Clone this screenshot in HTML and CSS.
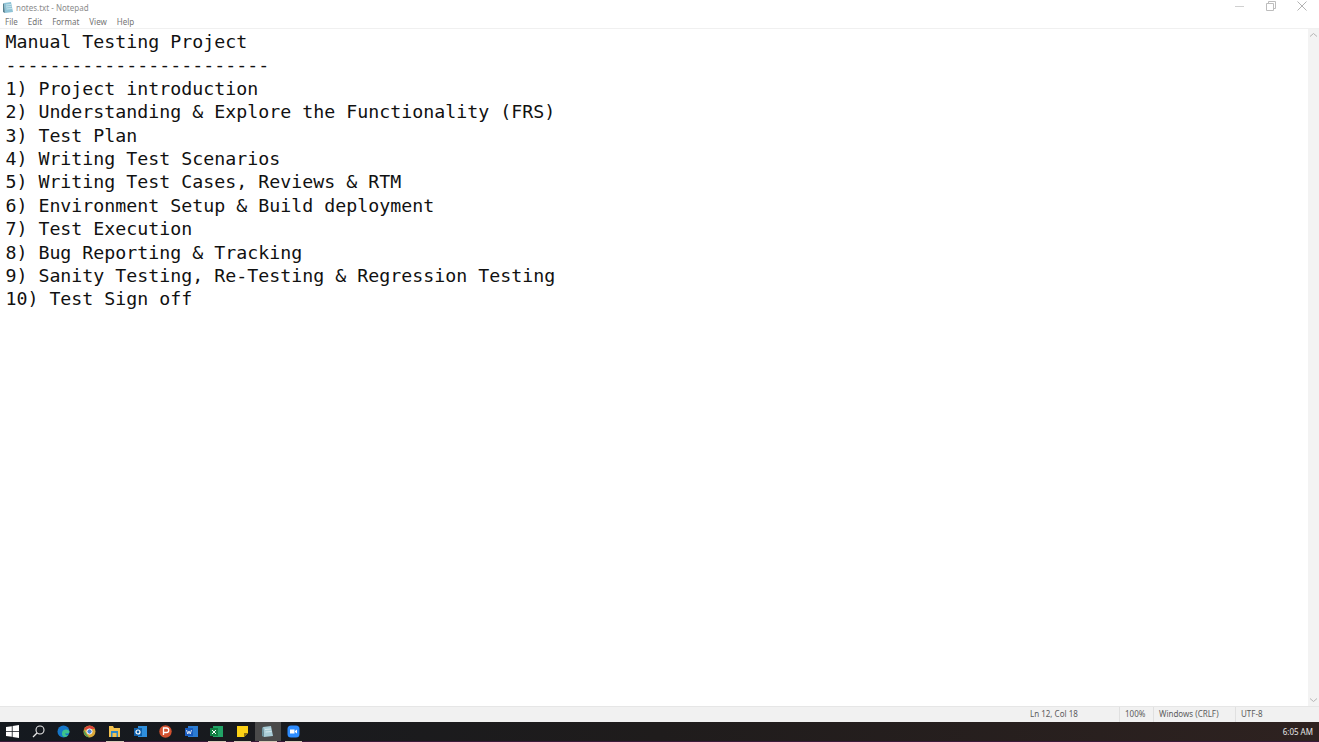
FILE: index.html
```html
<!DOCTYPE html>
<html>
	<head>
		<meta charset="UTF-8">
		<title>notes.txt - Notepad</title>
		<link rel="stylesheet" href="styles.css">
	</head>
	<body>
		<div class="window">
			<div class="titlebar">
				<svg class="app-icon" width="12" height="13" viewBox="0 0 12 13">
					<path d="M2 2 L9 1 L11 11 L3 12 Z" fill="#8fc3d6"/>
					<path d="M2 2 L3 12 L1 11 L1 3 Z" fill="#55808f"/>
					<path d="M4 4 L9 3.5 M4 6 L9.500 5.500 M4.500 8 L10 7.500" stroke="#d8edf3" stroke-width="0.8"/>
				</svg>
				<span class="title">notes.txt - Notepad</span>
				<div class="controls">
					<svg width="10" height="10" viewBox="0 0 10 10"><path d="M0 5.500 H9" stroke="#d0d0d0"/></svg>
					<svg width="10" height="10" viewBox="0 0 10 10"><path d="M.5 2.500 H7.500 V9.500 H.5 Z M2.500 2.500 V.5 H9.500 V7.500 H7.500" fill="none" stroke="#bdbdbd"/></svg>
					<svg width="10" height="10" viewBox="0 0 10 10"><path d="M.5 .5 L9.500 9.500 M9.500 .5 L.5 9.500" stroke="#aaa" stroke-width="0.9"/></svg>
				</div>
			</div>
			<div class="menubar">
				<span>File</span>
				<span>Edit</span>
				<span>Format</span>
				<span>View</span>
				<span>Help</span>
			</div>
			<div class="editor">
				<pre class="text">Manual Testing Project
------------------------
1) Project introduction
2) Understanding &amp; Explore the Functionality (FRS)
3) Test Plan
4) Writing Test Scenarios
5) Writing Test Cases, Reviews &amp; RTM
6) Environment Setup &amp; Build deployment
7) Test Execution
8) Bug Reporting &amp; Tracking
9) Sanity Testing, Re-Testing &amp; Regression Testing
10) Test Sign off</pre>
				<div class="scrollbar">
					<svg width="9" height="6" viewBox="0 0 9 6"><path d="M1 4.500 L4.500 1.500 L8 4.500" fill="none" stroke="#b5b5b5"/></svg>
					<svg width="9" height="6" viewBox="0 0 9 6"><path d="M1 1.500 L4.500 4.500 L8 1.500" fill="none" stroke="#b5b5b5"/></svg>
				</div>
			</div>
			<div class="statusbar">
				<span class="cell cell-pos">Ln 12, Col 18</span>
				<span class="cell cell-zoom">100%</span>
				<span class="cell cell-eol">Windows (CRLF)</span>
				<span class="cell cell-enc">UTF-8</span>
			</div>
		</div>
		<div class="taskbar">
			<div class="tb-item">
				<svg width="13" height="13" viewBox="0 0 13 13"><path d="M0 2 L5.800 1.200 V6 H0 Z M6.600 1 L13 0 V6 H6.600 Z M0 6.800 H5.800 V11.800 L0 11 Z M6.600 6.800 H13 V13 L6.600 12 Z" fill="#fff"/></svg>
			</div>
			<div class="tb-item">
				<svg width="13" height="13" viewBox="0 0 13 13"><circle cx="8" cy="5" r="4" fill="none" stroke="#e8e8e8" stroke-width="1.100"/><path d="M5 8 L1 12" stroke="#e8e8e8" stroke-width="1.200"/></svg>
			</div>
			<div class="tb-item">
				<svg width="13" height="13" viewBox="0 0 13 13"><circle cx="6.500" cy="6.500" r="6" fill="#1576c8"/><path d="M6 5.500 C9 3.500 12.500 5 12.500 7 C12.500 8.500 9.500 9 8 8.200 C8.500 10 10 10.800 11.500 10 C9.500 12.800 5 12.500 5 9 C5 7.500 5.300 6.300 6 5.500 Z" fill="#3cc48c"/></svg>
			</div>
			<div class="tb-item">
				<svg width="13" height="13" viewBox="0 0 13 13"><circle cx="6.500" cy="6.500" r="6" fill="#d9a93a"/><path d="M1 5 A6 6 0 0 1 12 4 H6 Z" fill="#d8433a"/><path d="M1 5 L4 10 L6.500 12.500 A6 6 0 0 1 1 5 Z" fill="#4a9e54"/><circle cx="6.500" cy="6.500" r="2.600" fill="#4a86d8" stroke="#fff"/></svg>
			</div>
			<div class="tb-item tb-open">
				<svg width="13" height="13" viewBox="0 0 13 13"><path d="M1 1 H5 L6 3 H12 V12 H1 Z" fill="#f2c14e"/><path d="M3 6 H10 V12 H8.500 V8 H4.500 V12 H3 Z" fill="#2f88c9"/></svg>
			</div>
			<div class="tb-item">
				<svg width="13" height="13" viewBox="0 0 13 13"><rect x="4" y="1" width="9" height="11" fill="#2f8fdc"/><rect x="0" y="3" width="8" height="8" fill="#0f5fa8"/><circle cx="4" cy="7" r="2" fill="none" stroke="#fff" stroke-width="1.200"/></svg>
			</div>
			<div class="tb-item">
				<svg width="13" height="13" viewBox="0 0 13 13"><circle cx="6.500" cy="6.500" r="6.200" fill="#d2512f"/><path d="M4.500 10 V3 H7.500 A2 2 0 0 1 7.500 7.500 H4.500" fill="none" stroke="#fff" stroke-width="1.300"/></svg>
			</div>
			<div class="tb-item">
				<svg width="13" height="13" viewBox="0 0 13 13"><rect x="3" y="1" width="10" height="11" fill="#2b7cd3"/><rect x="0" y="3" width="8" height="8" fill="#185abd"/><path d="M1.500 5 L2.800 9 L4 6 L5.200 9 L6.500 5" fill="none" stroke="#fff" stroke-width="0.800"/></svg>
			</div>
			<div class="tb-item tb-open">
				<svg width="13" height="13" viewBox="0 0 13 13"><rect x="3" y="1" width="10" height="11" fill="#21a366"/><rect x="0" y="3" width="8" height="8" fill="#107c41"/><path d="M2 5 L6 9 M6 5 L2 9" stroke="#fff"/></svg>
			</div>
			<div class="tb-item tb-open">
				<svg width="13" height="13" viewBox="0 0 13 13"><path d="M1 1 H12 V8 L8 12 H1 Z" fill="#fcd116"/><path d="M8 12 V8 H12 Z" fill="#8a6d10"/></svg>
			</div>
			<div class="tb-item tb-open tb-active">
				<svg width="13" height="13" viewBox="0 0 13 13"><path d="M2 2 L10 1 L12 11 L3 12 Z" fill="#a9ccd6"/><path d="M2 2 L3 12 L1 11 L1 3 Z" fill="#6d95a1"/><path d="M4 4.500 L10 4 M4.500 7 L10.500 6.500" stroke="#e1eff3" stroke-width="0.800"/></svg>
			</div>
			<div class="tb-item tb-open">
				<svg width="13" height="13" viewBox="0 0 13 13"><rect x="0.500" y="0.500" width="12" height="12" rx="3.500" fill="#2d8cff"/><path d="M3 4.500 H7.500 V8.500 H3 Z M8 6 L10 4.500 V8.500 L8 7 Z" fill="#fff"/></svg>
			</div>
			<div class="clock">6:05 AM</div>
		</div>
	</body>
</html>
```

FILE: styles.css
```css
*{
	margin: 0;
	padding: 0;
	box-sizing: border-box;
}
html,body{
	height: 100%;
	overflow: hidden;
}
body{
	display: flex;
	flex-direction: column;
	font-family: "Noto Sans", "Open Sans", sans-serif;
	background: #fff;
}
.window{
	flex: 1;
	min-height: 0;
	display: flex;
	flex-direction: column;
}
.titlebar{
	height: 15px;
	display: flex;
	align-items: center;
	padding-left: 2px;
	font-size: 8px;
	color: #8c8c8c;
}
.title{
	margin-left: 2px;
}
.controls{
	margin-left: auto;
	display: flex;
	gap: 21px;
	padding-right: 12px;
	padding-bottom: 3px;
}
.menubar{
	height: 14px;
	display: flex;
	padding-left: 5px;
	gap: 10px;
	font-size: 8px;
	line-height: 14px;
	color: #747474;
	border-bottom: 1px solid #f0f0f0;
}
.editor{
	flex: 1;
	min-height: 0;
	display: flex;
}
.text{
	flex: 1;
	padding: 1px 0 0 5.4px;
	font-family: "DejaVu Sans Mono", "Liberation Mono", monospace;
	font-size: 18.27px;
	line-height: 23.4px;
	color: #111;
}
.scrollbar{
	width: 11px;
	background: #f3f3f3;
	display: flex;
	flex-direction: column;
	justify-content: space-between;
	align-items: center;
	padding: 3px 0;
}
.statusbar{
	height: 16px;
	flex-shrink: 0;
	display: flex;
	background: #f1f1f1;
	border-top: 1px solid #e6e6e6;
	font-size: 8px;
	line-height: 14px;
	color: #5c5c5c;
}
.cell{
	padding-left: 5px;
	border-left: 1px solid #e0e0e0;
}
.cell-pos{
	margin-left: 1025px;
	width: 94px;
	border-left: 0;
}
.cell-zoom{
	width: 34px;
}
.cell-eol{
	width: 82px;
}
.cell-enc{
	flex: 1;
}
.taskbar{
	height: 20px;
	flex-shrink: 0;
	display: flex;
	align-items: stretch;
	background: linear-gradient(90deg, #14191f, #1f1c1c 50%, #2e2220);
	border-bottom: 1px solid #3a1a3a;
}
.tb-item{
	width: 25.5px;
	display: flex;
	align-items: center;
	justify-content: center;
	position: relative;
}
.tb-open::after{
	content: "";
	position: absolute;
	left: 4px;
	right: 4px;
	bottom: -1px;
	height: 1px;
	background: #d8c8b8;
}
.tb-active{
	background: #4a4a4a;
}
.clock{
	margin-left: auto;
	padding-right: 6px;
	font-size: 8px;
	line-height: 20px;
	color: #e6e6e6;
}
```
